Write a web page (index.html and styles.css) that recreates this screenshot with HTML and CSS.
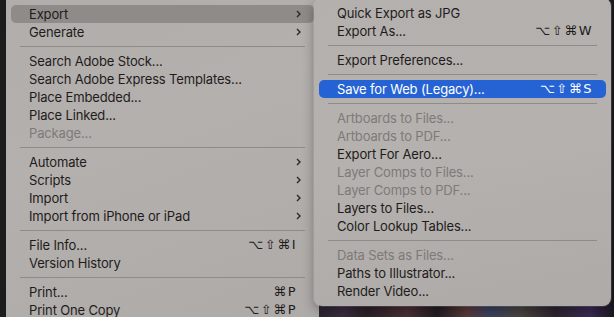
FILE: index.html
```html
<!DOCTYPE html>
<html lang="en">
<head>
  <meta charset="UTF-8" />
  <title>File menu - Export</title>
  <link rel="stylesheet" href="styles.css">
</head>
<body>
  <div class="backdrop"></div>

  <div class="menu main">
    <div class="row active">Export <span class="chev"><svg viewBox="0 0 5 8"><path d="M1 1l3 3-3 3"/></svg></span></div>
    <div class="row">Generate <span class="chev"><svg viewBox="0 0 5 8"><path d="M1 1l3 3-3 3"/></svg></span></div>
    <div class="sep"></div>
    <div class="row">Search Adobe Stock...</div>
    <div class="row">Search Adobe Express Templates...</div>
    <div class="row">Place Embedded...</div>
    <div class="row">Place Linked...</div>
    <div class="row off">Package...</div>
    <div class="sep"></div>
    <div class="row">Automate <span class="chev"><svg viewBox="0 0 5 8"><path d="M1 1l3 3-3 3"/></svg></span></div>
    <div class="row">Scripts <span class="chev"><svg viewBox="0 0 5 8"><path d="M1 1l3 3-3 3"/></svg></span></div>
    <div class="row">Import <span class="chev"><svg viewBox="0 0 5 8"><path d="M1 1l3 3-3 3"/></svg></span></div>
    <div class="row">Import from iPhone or iPad <span class="chev"><svg viewBox="0 0 5 8"><path d="M1 1l3 3-3 3"/></svg></span></div>
    <div class="sep"></div>
    <div class="row">File Info... <span class="key">⌥⇧⌘I</span></div>
    <div class="row">Version History</div>
    <div class="sep"></div>
    <div class="row">Print... <span class="key">⌘P</span></div>
    <div class="row">Print One Copy <span class="key">⌥⇧⌘P</span></div>
  </div>

  <div class="menu sub">
    <div class="row">Quick Export as JPG</div>
    <div class="row">Export As... <span class="key">⌥⇧⌘W</span></div>
    <div class="sep"></div>
    <div class="row">Export Preferences...</div>
    <div class="sep"></div>
    <div class="row hot">Save for Web (Legacy)... <span class="key">⌥⇧⌘S</span></div>
    <div class="sep"></div>
    <div class="row off">Artboards to Files...</div>
    <div class="row off">Artboards to PDF...</div>
    <div class="row">Export For Aero...</div>
    <div class="row off">Layer Comps to Files...</div>
    <div class="row off">Layer Comps to PDF...</div>
    <div class="row">Layers to Files...</div>
    <div class="row">Color Lookup Tables...</div>
    <div class="sep"></div>
    <div class="row off">Data Sets as Files...</div>
    <div class="row">Paths to Illustrator...</div>
    <div class="row">Render Video...</div>
  </div>
</body>
</html>
```

FILE: styles.css
```css
:root {
  --text: #1e1c1b;
  --muted: #7e7a78;
  --line: #8f8b89;
  --blue: #2563d4;
}
body {
  margin: 0;
  width: 614px;
  height: 317px;
  overflow: hidden;
  position: relative;
  background: #1c1b1d;
  font-family: Inter, "Noto Sans", sans-serif;
  font-size: 13px;
  letter-spacing: -0.15px;
  color: var(--text);
  padding-left: 6px;
  box-sizing: border-box;
}
.backdrop {
  position: absolute;
  left: 319px;
  top: 300px;
  width: 295px;
  height: 17px;
  background: linear-gradient(90deg, #2b2530 0%, #3c2d40 8%, #2a2028 16%, #4b3035 30%, #221c22 40%, #5a3a3a 50%, #3a4060 58%, #4a4440 68%, #2c2430 80%, #3b2a55 92%, #1a1720 100%);
}
.menu {
  box-sizing: border-box;
}
.main {
  width: 313px;
  height: 330px;
  padding: 5px 5px 0;
  background: linear-gradient(160deg, #b1adab 0%, #b4b0ae 40%, #adaaa8 100%);
}
.sub {
  position: absolute;
  left: 314px;
  top: -2px;
  width: 297px;
  height: 308px;
  padding: 6px 5px 0;
  border-radius: 8px;
  background: linear-gradient(170deg, #b4b0ae 0%, #b5b1af 50%, #adaaa8 100%);
  box-shadow: 0 0 0 1px rgba(255, 255, 255, 0.12), 0 4px 12px rgba(0, 0, 0, 0.35);
}
.row {
  height: 18px;
  line-height: 18px;
  padding: 0 13px 0 18px;
  display: flex;
  align-items: center;
  justify-content: space-between;
  border-radius: 5px;
  white-space: nowrap;
}
.row.active {
  background: #8f8b89;
}
.row.hot {
  background: var(--blue);
  color: white;
}
.row.off {
  color: var(--muted);
}
.main .row .key {
  margin-right: 4px;
}
.key {
  font-family: "DejaVu Sans", sans-serif;
  font-size: 13px;
  letter-spacing: 1.5px;
}
.chev svg {
  display: block;
  width: 5px;
  height: 8px;
  fill: none;
  stroke: #2a2827;
  stroke-width: 1.4;
}
.sep {
  height: 1px;
  margin: 5px 9px;
  background: var(--line);
}
```
